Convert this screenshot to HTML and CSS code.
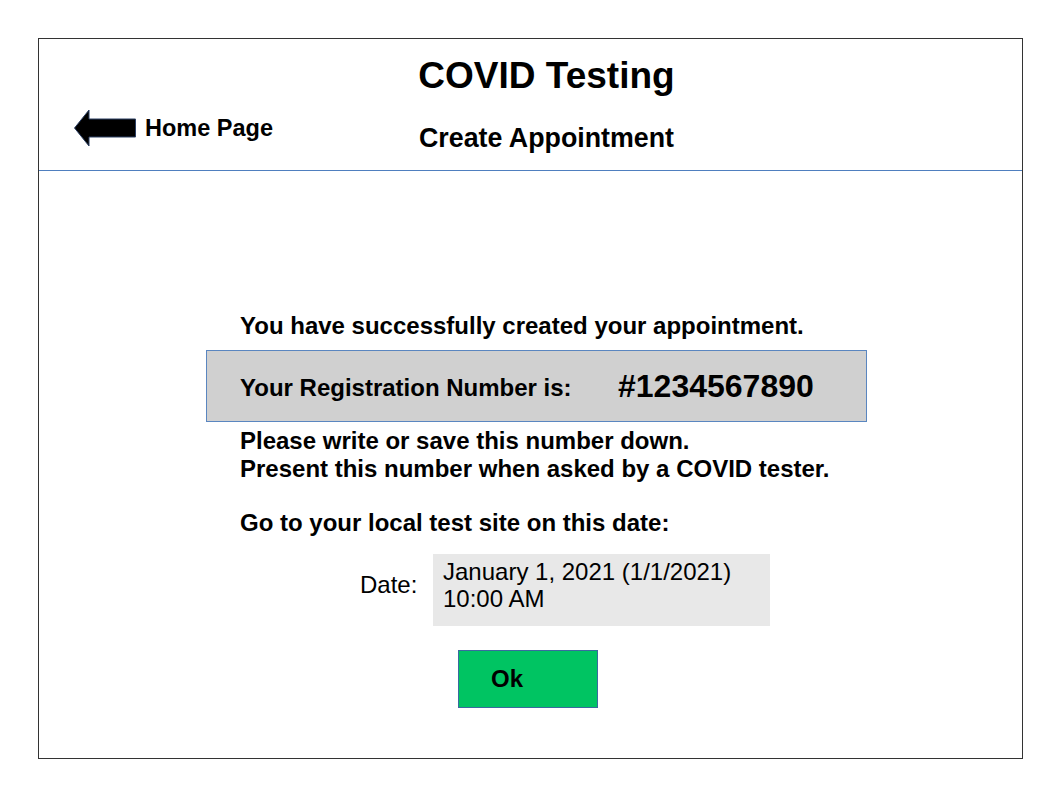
FILE: index.html
```html
<!DOCTYPE html>
<html>
<head>
<meta charset="utf-8">
<link rel="stylesheet" href="styles.css">
</head>
<body>
<div class="frame">
  <header class="header">
    <h1 class="title">COVID Testing</h1>
    <div class="subrow">
      <a class="home" href="#">
        <svg class="arrow" width="63" height="39" viewBox="0 0 63 39">
          <path d="M0.5 19 L15 1 L15 10 L61.5 10 L61.5 28 L15 28 L15 37 Z" fill="#000" stroke="#2b3f63" stroke-width="1"/>
        </svg>
        <span>Home Page</span>
      </a>
      <h2 class="subtitle">Create Appointment</h2>
      <div></div>
    </div>
  </header>
  <main class="content">
    <div class="panel">
      <p class="line first">You have successfully created your appointment.</p>
      <div class="regbox">
        <span class="reglabel">Your Registration Number is:</span>
        <span class="regnum">#1234567890</span>
      </div>
      <p class="line after-box">Please write or save this number down.</p>
      <p class="line">Present this number when asked by a COVID tester.</p>
      <p class="line go">Go to your local test site on this date:</p>
      <div class="daterow">
        <span class="datelabel">Date:</span>
        <div class="datebox">
          <div>January 1, 2021 (1/1/2021)</div>
          <div>10:00 AM</div>
        </div>
      </div>
      <button class="ok">Ok</button>
    </div>
  </main>
</div>
</body>
</html>
```

FILE: styles.css
```css
* { box-sizing: border-box; }
html, body { margin: 0; padding: 0; background: #fff; }
body {
  font-family: "Liberation Sans", Arial, sans-serif;
  color: #000;
}
.frame {
  margin: 38px 0 0 38px;
  width: 985px;
  height: 721px;
  border: 1px solid #333;
  display: flex;
  flex-direction: column;
}
.header {
  height: 132px;
  border-bottom: 1px solid #4f7fbf;
  padding-top: 15px;
}
.title {
  margin: 0;
  padding-left: 32px;
  text-align: center;
  font-size: 37px;
  line-height: 44px;
  font-weight: bold;
}
.subrow {
  display: grid;
  grid-template-columns: 1fr auto 1fr;
}
.home {
  display: flex;
  align-items: center;
  gap: 8px;
  margin-left: 35px;
  margin-top: 11px;
  align-self: start;
  color: #000;
  text-decoration: none;
  font-weight: bold;
  font-size: 23.5px;
  line-height: 39px;
}
.arrow { display: block; }
.subtitle {
  margin: 0;
  padding-top: 25px;
  padding-left: 32px;
  font-size: 26.8px;
  line-height: 30px;
  font-weight: bold;
  text-align: center;
}
.content {
  flex: 1;
  padding-top: 141px;
}
.panel {
  margin-left: 167px;
  width: 661px;
}
.line {
  margin: 0;
  padding-left: 34px;
  font-size: 24px;
  line-height: 28px;
  font-weight: bold;
  white-space: nowrap;
}
.first { margin-bottom: 10px; }
.regbox {
  height: 72px;
  background: #d0d0d0;
  border: 1px solid #5a86c0;
  display: grid;
  grid-template-columns: 378px auto;
  align-items: center;
  padding-left: 33px;
}
.reglabel {
  font-size: 24px;
  font-weight: bold;
  padding-top: 3px;
}
.regnum {
  font-size: 32px;
  font-weight: bold;
}
.after-box { margin-top: 5px; }
.go { margin-top: 26px; }
.daterow {
  display: flex;
  margin-top: 17px;
  margin-left: 154px;
}
.datelabel {
  width: 73px;
  font-size: 24px;
  line-height: 27px;
  padding-top: 17px;
}
.datebox {
  width: 337px;
  height: 72px;
  background: #e8e8e8;
  padding: 4px 0 0 10px;
  font-size: 24px;
  line-height: 27px;
}
.ok {
  display: block;
  margin: 24px 0 0 252px;
  width: 140px;
  height: 58px;
  background: #00c462;
  border: 1px solid #3a6aa0;
  border-radius: 0;
  padding: 0 0 0 32px;
  text-align: left;
  font-family: "Liberation Sans", Arial, sans-serif;
  font-size: 24px;
  font-weight: bold;
  color: #000;
}
```
